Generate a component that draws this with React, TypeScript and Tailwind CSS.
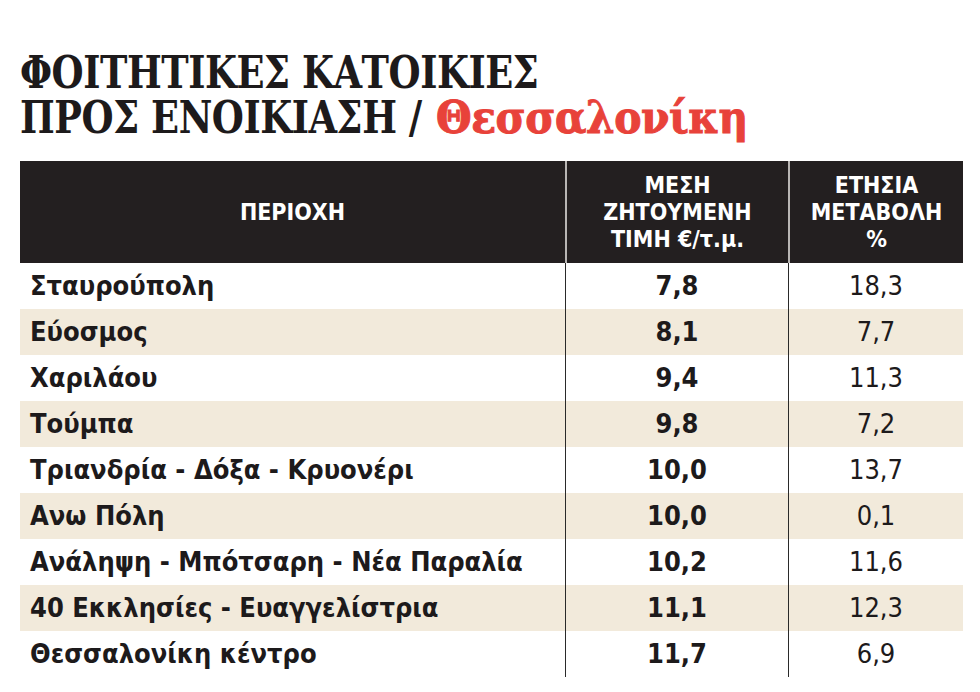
const rows = [
  { area: "Σταυρούπολη", price: "7,8", change: "18,3" },
  { area: "Εύοσμος", price: "8,1", change: "7,7" },
  { area: "Χαριλάου", price: "9,4", change: "11,3" },
  { area: "Τούμπα", price: "9,8", change: "7,2" },
  { area: "Τριανδρία - Δόξα - Κρυονέρι", price: "10,0", change: "13,7" },
  { area: "Ανω Πόλη", price: "10,0", change: "0,1" },
  { area: "Ανάληψη - Μπότσαρη - Νέα Παραλία", price: "10,2", change: "11,6" },
  { area: "40 Εκκλησίες - Ευαγγελίστρια", price: "11,1", change: "12,3" },
  { area: "Θεσσαλονίκη κέντρο", price: "11,7", change: "6,9" },
];

const sans = "font-['DejaVu_Sans_Condensed','Liberation_Sans_Narrow','DejaVu_Sans',sans-serif] [font-stretch:condensed]";

export default function App() {
  return (
    <div className="w-[980px] h-[692px] bg-white overflow-hidden">
      <div className="pt-[50px] pl-[20px]">
        <h1 className="inline-block origin-left scale-x-[0.93] whitespace-nowrap font-['DejaVu_Serif_Condensed','DejaVu_Serif',serif] [font-stretch:condensed] font-bold text-[44px] leading-[45px] text-[#1d1a1b] tracking-[-0.5px]">
          ΦΟΙΤΗΤΙΚΕΣ ΚΑΤΟΙΚΙΕΣ
          <br />
          ΠΡΟΣ ΕΝΟΙΚΙΑΣΗ /{" "}
          <span className="ml-[2px] font-['DejaVu_Serif','Liberation_Serif',serif] [font-stretch:normal] font-black text-[#e8423a] [-webkit-text-stroke:1px_#e8423a]">
            Θεσσαλονίκη
          </span>
        </h1>
      </div>

      <div className={`ml-[20px] mt-[21px] w-[943px] ${sans}`}>
        <div className="grid grid-cols-[545px_223px_175px] h-[102px] bg-[#231f20] text-white text-[23px] leading-[27px] font-bold">
          <div className="flex items-center justify-center">ΠΕΡΙΟΧΗ</div>
          <div className="flex items-center justify-center text-center border-l-2 border-[#b9b6b4]">
            ΜΕΣΗ
            <br />
            ΖΗΤΟΥΜΕΝΗ
            <br />
            ΤΙΜΗ €/τ.μ.
          </div>
          <div className="flex items-center justify-center text-center border-l-2 border-[#b9b6b4]">
            ΕΤΗΣΙΑ
            <br />
            ΜΕΤΑΒΟΛΗ
            <br />%
          </div>
        </div>

        {rows.map((r, i) => (
          <div
            key={r.area}
            className={`grid grid-cols-[545px_223px_175px] h-[46px] text-[27px] text-[#1d1a1b] ${
              i % 2 === 1 ? "bg-[#f2eadb]" : "bg-white"
            }`}
          >
            <div className="flex items-center pl-[10px] font-bold">{r.area}</div>
            <div className="flex items-center justify-center font-bold border-l border-[#2a2a2a]">{r.price}</div>
            <div className="flex items-center justify-center border-l border-[#2a2a2a]">{r.change}</div>
          </div>
        ))}
      </div>
    </div>
  );
}
